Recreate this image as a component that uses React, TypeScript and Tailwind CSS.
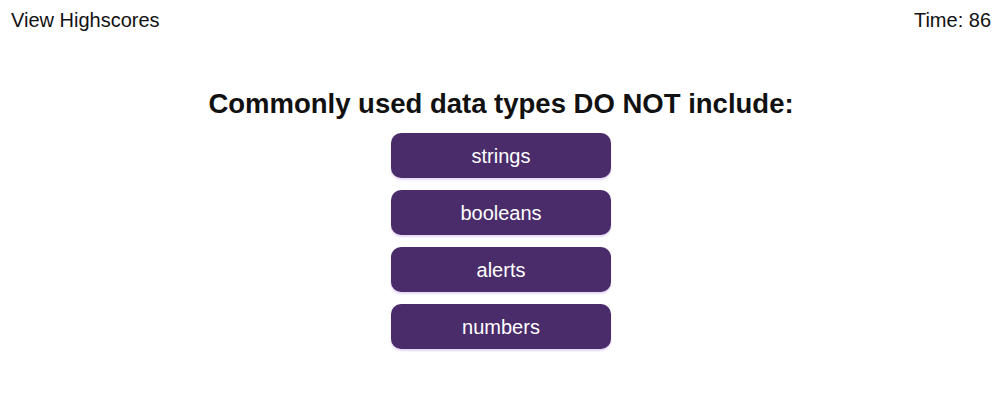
export default function App() {
  const answers = ["strings", "booleans", "alerts", "numbers"];
  return (
    <div className="min-h-[403px] bg-white text-[#111]" style={{ fontFamily: '"Liberation Sans", Arial, sans-serif' }}>
      <div className="flex justify-between px-[11px] pt-[8px] text-[20px] leading-[24px]">
        <span>View Highscores</span>
        <span className="mr-[-4px]">Time: 86</span>
      </div>
      <div className="flex flex-col items-center mt-[56px] pl-[4px]">
        <h1 className="text-[27.5px] font-bold leading-[32px] mb-[13px]">Commonly used data types DO NOT include:</h1>
        <div className="flex flex-col gap-[12px]">
          {answers.map((a) => (
            <button
              key={a}
              className="w-[220px] h-[45px] rounded-[10px] bg-[#4a2c6a] text-white text-[20px] shadow-[0_2px_2px_#e6d8f5]"
            >
              {a}
            </button>
          ))}
        </div>
      </div>
    </div>
  );
}
